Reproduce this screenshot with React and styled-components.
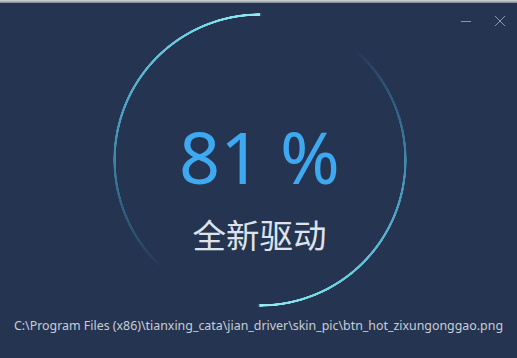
import React from "react";
import styled, { createGlobalStyle } from "styled-components";

const GlobalStyle = createGlobalStyle`
  html, body {
    margin: 0;
    padding: 0;
    background: #253551;
  }
  * {
    box-sizing: border-box;
  }
`;

const Window = styled.div`
  position: relative;
  width: 517px;
  height: 358px;
  overflow: hidden;
  background: #253551;
  display: flex;
  flex-direction: column;
  align-items: center;
  font-family: "Noto Sans", "Noto Sans CJK SC", sans-serif;
`;

const TopEdge = styled.div`
  align-self: stretch;
  height: 3px;
  background: linear-gradient(#d6d9de, #7c8595);
`;

const Controls = styled.div`
  position: absolute;
  top: 12px;
  right: 8px;
  display: flex;
  align-items: center;
  gap: 16px;
`;

const CtrlButton = styled.button`
  width: 18px;
  height: 18px;
  padding: 0;
  border: 0;
  background: transparent;
  display: flex;
  align-items: center;
  justify-content: center;
  color: #8797b3;
  cursor: pointer;
`;

const Ring = styled.div`
  position: relative;
  margin-top: 10px;
  margin-left: 2px;
  width: 294px;
  height: 294px;
  display: flex;
  flex-direction: column;
  align-items: center;

  &::before {
    content: "";
    position: absolute;
    inset: 0;
    border-radius: 50%;
    background: conic-gradient(
      transparent 0deg,
      transparent 40deg,
      rgba(45, 120, 165, 0.4) 70deg,
      rgba(80, 170, 210, 0.85) 110deg,
      #74dae6 155deg,
      #95ecf2 180deg,
      transparent 180.5deg,
      transparent 222deg,
      rgba(45, 120, 165, 0.4) 252deg,
      rgba(80, 170, 210, 0.85) 292deg,
      #74dae6 337deg,
      #95ecf2 360deg
    );
    -webkit-mask: radial-gradient(
      farthest-side,
      transparent calc(100% - 3px),
      #000 calc(100% - 2.5px),
      #000 calc(100% - 0.5px),
      transparent 100%
    );
    mask: radial-gradient(
      farthest-side,
      transparent calc(100% - 3px),
      #000 calc(100% - 2.5px),
      #000 calc(100% - 0.5px),
      transparent 100%
    );
    filter: drop-shadow(0 0 1.5px rgba(110, 215, 230, 0.6));
  }
`;

const Percent = styled.div`
  margin-top: 107px;
  font-family: "Noto Sans", sans-serif;
  font-size: 72px;
  line-height: 72px;
  font-weight: 400;
  color: #3ea9f0;
`;

const Status = styled.div`
  margin-top: 24px;
  font-family: "Noto Sans CJK SC", sans-serif;
  font-size: 33.5px;
  line-height: 36px;
  color: #dfe2ea;
`;

const FilePath = styled.div`
  margin-top: 10px;
  font-family: "Noto Sans", "Noto Sans CJK SC", sans-serif;
  font-size: 12.4px;
  line-height: 18px;
  color: #c9cdd6;
  white-space: nowrap;
`;

export default function App() {
  return (
    <>
      <GlobalStyle />
      <Window>
        <TopEdge />
        <Controls>
          <CtrlButton aria-label="minimize">
            <svg width="12" height="12" viewBox="0 0 12 12">
              <line x1="1" y1="6.5" x2="11" y2="6.5" stroke="currentColor" strokeWidth="1" />
            </svg>
          </CtrlButton>
          <CtrlButton aria-label="close">
            <svg width="12" height="12" viewBox="0 0 12 12">
              <path d="M1 1 L11 11 M11 1 L1 11" stroke="currentColor" strokeWidth="1" />
            </svg>
          </CtrlButton>
        </Controls>
        <Ring>
          <Percent>81 %</Percent>
          <Status>全新驱动</Status>
        </Ring>
        <FilePath>
          C:\Program Files (x86)\tianxing_cata\jian_driver\skin_pic\btn_hot_zixungonggao.png
        </FilePath>
      </Window>
    </>
  );
}
